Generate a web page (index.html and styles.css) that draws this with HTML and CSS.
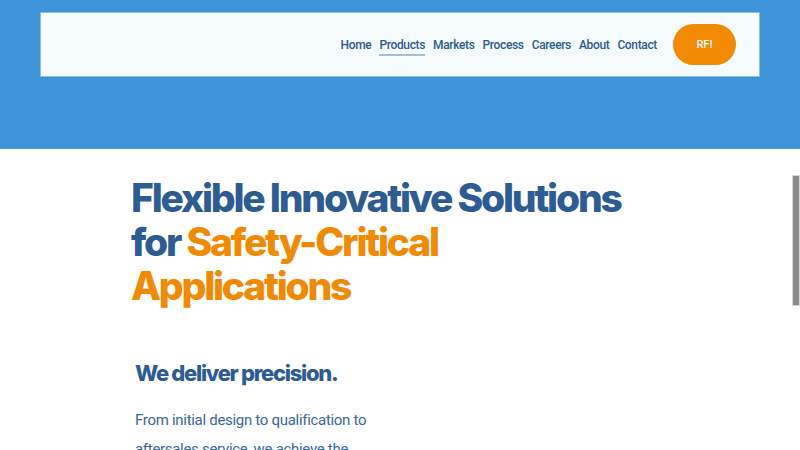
FILE: index.html
```html
<!DOCTYPE html>
<html lang="en">
<head>
<meta charset="utf-8">
<title>Flexible Innovative Solutions</title>
<link rel="stylesheet" href="styles.css">
</head>
<body>
<header class="hero">
  <div class="navbar">
    <nav class="nav">
      <a class="nav-link" href="#">Home</a>
      <a class="nav-link active" href="#">Products</a>
      <a class="nav-link" href="#">Markets</a>
      <a class="nav-link" href="#">Process</a>
      <a class="nav-link" href="#">Careers</a>
      <a class="nav-link" href="#">About</a>
      <a class="nav-link" href="#">Contact</a>
    </nav>
    <a class="rfi" href="#">RFI</a>
  </div>
</header>
<main class="content">
  <h1 class="headline">Flexible Innovative Solutions<br>for <span class="accent">Safety-Critical<br>Applications</span></h1>
  <section class="intro">
    <h2 class="intro-title">We deliver precision.</h2>
    <p class="intro-text">From initial design to qualification to aftersales service, we achieve the highest standards.</p>
  </section>
</main>
<div class="scroll-thumb"></div>
</body>
</html>
```
FILE: styles.css
```css
* { box-sizing: border-box; }
html, body { margin: 0; padding: 0; overflow: hidden; height: 450px; }
body { font-family: Roboto, "Liberation Sans", sans-serif; background: #fff; color: #2d5c94; }

.hero {
  background: #3f93d9;
  height: 149px;
  padding: 12px 40px 0 40px;
  border-bottom: 1px solid #4d9ade;
}
.navbar {
  background: #f5fbfc;
  height: 65px;
  display: flex;
  align-items: center;
  justify-content: flex-end;
  padding-right: 23px;
  border: 1px solid #8cbde8;
}
.nav { display: flex; gap: 8px; margin-right: 16px; }
.nav-link {
  font-size: 12px;
  font-weight: 500;
  color: #2d5c94;
  text-decoration: none;
  letter-spacing: -0.35px;
  padding: 3px 0 2px;
  border-bottom: 2px solid transparent;
  margin-top: 2px;
}
.nav-link.active { border-bottom-color: #a6bdd6; }
.rfi {
  width: 63px;
  height: 41px;
  border-radius: 21px;
  background: #f18a00;
  color: #fff;
  font-size: 11px;
  font-weight: 500;
  text-decoration: none;
  display: flex;
  align-items: center;
  justify-content: center;
}

.content { padding: 27px 0 0 131px; }
.headline {
  margin: 0;
  font-family: Inter, "Liberation Sans", sans-serif;
  font-weight: 800;
  font-size: 39px;
  line-height: 44px;
  letter-spacing: -2.2px;
  color: #2d5c94;
}
.accent { color: #f18a00; }
.intro { padding: 51px 0 0 4px; width: 250px; }
.intro-title {
  margin: 0;
  font-family: Inter, "Liberation Sans", sans-serif;
  font-weight: 800;
  font-size: 22px;
  letter-spacing: -1.3px;
  line-height: 28px;
}
.intro-text {
  margin: 19px 0 0;
  font-size: 15px;
  line-height: 29px;
  letter-spacing: -0.3px;
  color: #3a679c;
}
.scroll-thumb {
  position: absolute;
  left: 792px;
  top: 175px;
  width: 8px;
  height: 131px;
  background: #8a8a8a;
  border: 1px solid #d8d8d8;
}
```
